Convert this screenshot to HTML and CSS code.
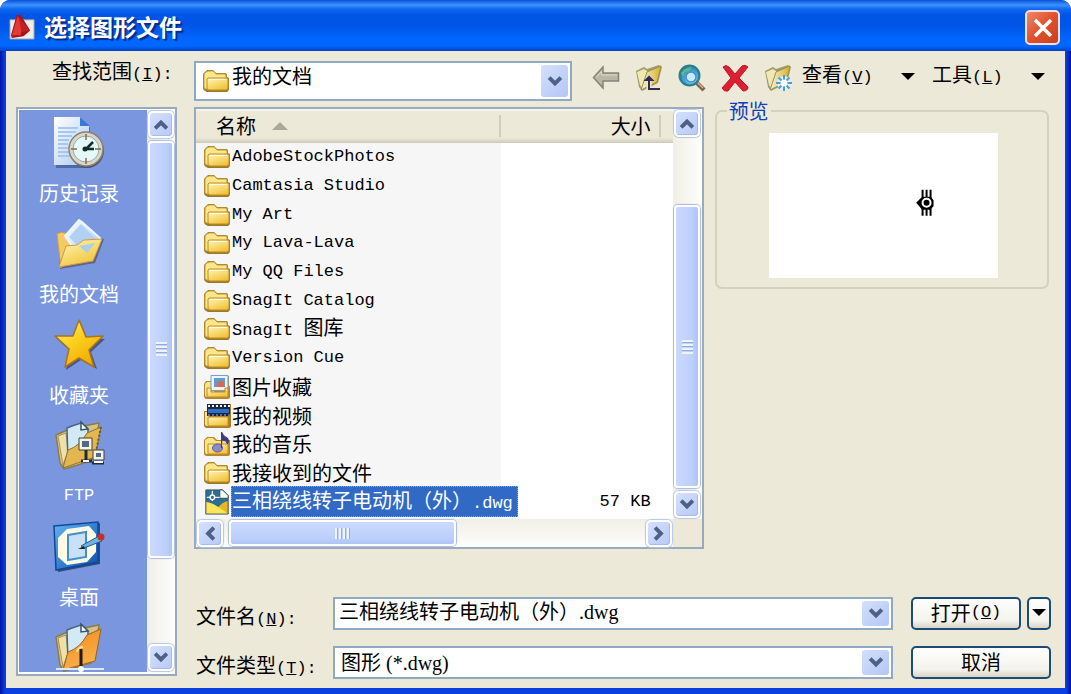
FILE: index.html
```html
<!DOCTYPE html>
<html lang="zh-CN">

<head>
  <meta charset="UTF-8">
  <meta name="viewport" content="width=device-width, initial-scale=1.0">
  <title>选择图形文件</title>
  <link rel="stylesheet" href="styles.css">
</head>

<body>
  <!-- 图标定义 -->
  <svg class="sprite" aria-hidden="true">
    <defs>
      <linearGradient id="gold" x1="0" y1="0" x2="0.6" y2="1">
        <stop offset="0" stop-color="#fff7bb"/>
        <stop offset="1" stop-color="#f2c33a"/>
      </linearGradient>
      <linearGradient id="orange" x1="0" y1="0" x2="0.4" y2="1">
        <stop offset="0" stop-color="#f58a1c"/>
        <stop offset="1" stop-color="#f6b04a"/>
      </linearGradient>
      <linearGradient id="flap" x1="0" y1="0" x2="1" y2="0">
        <stop offset="0" stop-color="#f6f1d2"/>
        <stop offset="0.6" stop-color="#e2cd72"/>
        <stop offset="1" stop-color="#d9b21c"/>
      </linearGradient>
      <linearGradient id="paper" x1="0" y1="0" x2="1" y2="1">
        <stop offset="0" stop-color="#ffffff"/>
        <stop offset="1" stop-color="#a9c8ee"/>
      </linearGradient>
      <linearGradient id="star" x1="0" y1="0" x2="0.7" y2="1">
        <stop offset="0" stop-color="#fff27a"/>
        <stop offset="0.5" stop-color="#fccf1e"/>
        <stop offset="1" stop-color="#f0a800"/>
      </linearGradient>
      <linearGradient id="desk" x1="0" y1="0" x2="1" y2="1">
        <stop offset="0" stop-color="#5fb4f2"/>
        <stop offset="1" stop-color="#0c4fae"/>
      </linearGradient>
      <radialGradient id="lens" cx="0.6" cy="0.65" r="0.7">
        <stop offset="0" stop-color="#d6f2ff"/>
        <stop offset="0.5" stop-color="#4ba3d8"/>
        <stop offset="1" stop-color="#1f6fa0"/>
      </radialGradient>
    </defs>
    <symbol id="i-folder" viewBox="0 0 28 24">
      <path d="M3 22q-2-1-2-3V6q0-2 2-3l2-2h6l3 3h9q2 0 2 2v2l2 1v11q0 2-2 3H5z" fill="#9a7a28"/>
      <path d="M2 6q0-2 2-3l2-1h5l3 3h9q1 0 1 2v13H4q-2 0-2-2z" fill="#fbe68c" stroke="#c79c35"/>
      <path d="M6 9h18q2 0 2 1v9q0 2-2 2H7q-2 0-2-2v-9z" fill="url(#gold)" stroke="#c08c26"/>
      <path d="M7 10.500h17" stroke="#fffbe0"/>
    </symbol>
    <symbol id="i-arrow" viewBox="0 0 12 10">
      <path d="M1.500 2 6 6.500 10.500 2" fill="none" stroke="#4d6185" stroke-width="3"/>
    </symbol>
    <symbol id="i-back" viewBox="0 0 28 28">
      <path d="M1.500 13.500 11 3v6h15.500v8H11v7z" fill="#b9b8a6" stroke="#858478" stroke-width="1.500"/>
      <path d="M4 13.500 9.500 7.500V11H25" fill="none" stroke="#dcdbc8"/>
    </symbol>
    <symbol id="i-tilt" viewBox="0 0 28 28">
      <path d="M1 7 9 3l3 2 12-4 3 2-4 16-16 8-3-4z" fill="#a39a66"/>
      <path d="M2 8l7-3 3 2 1 5-6 12-2-3z" fill="#efe7b4"/>
      <path d="M12 8 26 2l-4 16L6 26z" fill="url(#flap)" stroke="#99905c"/>
    </symbol>
    <symbol id="i-up" viewBox="0 0 28 28">
      <use href="#i-tilt"/>
      <path d="M26 25H14V15" fill="none" stroke="#efe8c4" stroke-width="5"/>
      <path d="M25 25H14V14" fill="none" stroke="#2d2a5e" stroke-width="2"/>
      <path d="M8.500 17 14 11.500l5.500 5.500z" fill="#2d2a5e"/>
    </symbol>
    <symbol id="i-search" viewBox="0 0 28 28">
      <path d="m18 18 8 8" stroke="#7b6550" stroke-width="4.500"/>
      <path d="m18 17 7 7" stroke="#d7b189" stroke-width="1.500"/>
      <circle cx="11.500" cy="11.500" r="10" fill="url(#lens)" stroke="#2a7f8e" stroke-width="2"/>
      <path d="M3 9q4-6 11-6l-3 4-4 1-2 5z" fill="#5fb883"/>
      <circle cx="13" cy="13" r="5" fill="#c8ecff" stroke="#4392c4" stroke-width="1.500"/>
    </symbol>
    <symbol id="i-delete" viewBox="0 0 28 28">
      <path d="M2 3q3-3 6 0l6 7 7-8q3-2 6 1l-9 11 9 9q0 4-5 4l-8-9-7 9q-4 1-6-3l9-10z" fill="#dc1f32" stroke="#b9182a"/>
    </symbol>
    <symbol id="i-new" viewBox="0 0 28 28">
      <use href="#i-tilt"/>
      <circle cx="20" cy="19" r="7" fill="#dff0f6"/>
      <path d="M20 11v16M12 19h16M14.500 13.500l11 11M25.500 13.500l-11 11" stroke="#4f9cd0" stroke-width="2"/>
      <circle cx="20" cy="19" r="3.500" fill="#fff"/>
    </symbol>
    <symbol id="i-pictures" viewBox="0 0 28 26">
      <path d="M1 10l2-3h5v-5h18v9l1 2v10q0 2-2 2H4q-3 0-3-3z" fill="#b2872d"/>
      <path d="M2 10l2-2h5l2 3v12H4q-2 0-2-2z" fill="#fae384"/>
      <path d="M8 1.500h17v15H8z" fill="#eef4fd" stroke="#7b9cc8"/>
      <path d="M11 4h11v9H11z" fill="#5a9ddc"/>
      <path d="M13 13l2-6h5l2 6z" fill="#d96b4c"/>
      <path d="M4 14h4v4h14v-4h3v8q0 1-1 1H5q-1 0-1-1z" fill="url(#gold)" stroke="#c18c27"/>
    </symbol>
    <symbol id="i-video" viewBox="0 0 28 26">
      <path d="M1 8h3V1h24v22q0 2-3 2H4q-3 0-3-3z" fill="#a77d28"/>
      <path d="M2 9h4v14H4q-2 0-2-2z" fill="#fae384"/>
      <path d="M4 1h23v12H4z" fill="#1d2636"/>
      <path d="M5 6h21v4H5z" fill="#2f6fd0"/>
      <path d="M5 3h22" stroke="#eef2f7" stroke-width="2" stroke-dasharray="2 2"/>
      <path d="M5 12h22" stroke="#a9b6c6" stroke-dasharray="2 2"/>
      <path d="M5 14h20v9H6q-1 0-1-1z" fill="url(#gold)" stroke="#c18c27"/>
    </symbol>
    <symbol id="i-music" viewBox="0 0 28 26">
      <path d="M1 9l3-3h7l3 3h13v14q0 2-2 2H4q-3 0-3-3z" fill="#b2872d"/>
      <path d="M2 9l3-2h5l3 3h11v13H4q-2 0-2-2z" fill="#fae384"/>
      <path d="M5 13h20v9q0 1-1 1H6q-1 0-1-1z" fill="url(#gold)" stroke="#c18c27"/>
      <ellipse cx="14.500" cy="17" rx="5" ry="4" fill="#8d8bc6" stroke="#5f5aa0"/>
      <path d="M18.500 17V1q2 5 6 6 2 3 0 6-1-4-5-4" fill="#3c3a86" stroke="#3c3a86"/>
    </symbol>
    <symbol id="i-dwg" viewBox="0 0 28 28">
      <path d="M2 1h18l6 6v20H2z" fill="#2c6f95"/>
      <path d="M2 14q8 1 13 6 5-6 11-7v14H2z" fill="#e9b71c"/>
      <path d="M2 14q9 1 24 13H2z" fill="#ffe559"/>
      <path d="M2 1h18l6 6v20H2z" fill="none" stroke="#354b50"/>
      <path d="M17 1v9h9V7l-6-6z" fill="#f3f8fb" stroke="#354b50"/>
      <path d="M9 2v11M3 9h14" stroke="#dcebf3" stroke-width="1.500"/>
      <circle cx="9" cy="9" r="2.500" fill="#2c6f95" stroke="#fff" stroke-width="1.500"/>
    </symbol>
    <symbol id="i-history" viewBox="0 0 54 54">
      <path d="M4 3h25l9 9v40H4z" fill="#4f68a6"/>
      <path d="M2 1h26l9 9v39H2z" fill="url(#paper)"/>
      <path d="M28 1v9h10z" fill="#3a78d6"/>
      <path d="M6 12h20M6 16h18M6 20h14M6 24h11M6 28h10M6 32h10M6 36h11M6 40h14" stroke="#a5c9ee" stroke-width="2"/>
      <circle cx="35" cy="35" r="17" fill="#4d5566"/>
      <circle cx="34" cy="33" r="17" fill="#dcd6c8" stroke="#85827b" stroke-width="1.500"/>
      <circle cx="34" cy="33" r="13" fill="#e2fafa" stroke="#98a9a8"/>
      <path d="M34 18v6M34 42v6M19 33h6M43 33h6" stroke="#94643c" stroke-width="1.500"/>
      <path d="m41 26-7 7h8" fill="none" stroke="#172b28" stroke-width="2.500"/>
      <circle cx="33" cy="33" r="2.500" fill="#172b28"/>
    </symbol>
    <symbol id="i-docs" viewBox="0 0 54 54">
      <path d="M8 52 6 18l6-2 40 6-9 24z" fill="#59658c"/>
      <path d="M5 17q4-3 8-1l4 4 9 2-17 29z" fill="#f5c964" stroke="#cf9f42"/>
      <path d="M13 19 27 3l3 2 18 16-18 22z" fill="url(#paper)" stroke="#e9f6ff" stroke-width="2"/>
      <path d="m17 20 12-13 15 15-15 10z" fill="#b2cff4"/>
      <path d="M14 29l11-1 7-5 18-1-9 22-34 6z" fill="url(#gold)" stroke="#cf9b3f"/>
      <path d="m27 29 16-3-8 10z" fill="#a8d1e9"/>
    </symbol>
    <symbol id="i-star" viewBox="0 0 54 54">
      <path d="m28 3 7 17 18 1-14 13 6 17-16-9-15 10 4-19L4 20l18-2z" fill="#41466b" opacity="0.8"/>
      <path d="m27 2 7 17 17-1-14 14 5 17-15-9-14 9 4-18L3 18l18 0z" fill="url(#star)" stroke="#a8741d" stroke-width="1.500" stroke-linejoin="round"/>
    </symbol>
    <!-- 带文件页的打开文件夹 -->
    <symbol id="i-tabfolder" viewBox="0 0 54 54">
      <path d="M4 16l9-4 4-2 30-6-2 12-6 26-27 8-4-6z" fill="#d9c384" stroke="#8d7c48" stroke-width="1.500"/>
      <path d="M6 17l8-3 2 18-5 14z" fill="#efe0a8" stroke="#a8945a"/>
      <path d="M15 9l5-2 9-3 7 6v20L16 44z" fill="#d3e9f3" stroke="#476780" stroke-width="1.500"/>
      <path d="M29 3v8l7-1z" fill="#fff" stroke="#35556e" stroke-width="1.500"/>
    </symbol>
    <symbol id="i-ftp" viewBox="0 0 54 54">
      <use href="#i-tabfolder"/>
      <path d="M16 31q12-4 19-17l14-6-6 30-32 11z" fill="#e3b650" stroke="#8f7433"/>
      <path d="M49 8 43 38" stroke="#6d5a2c" stroke-width="2" stroke-dasharray="2 2"/>
      <path d="M27 19h13v12H27zM41 31h11v10H41z" fill="#f6f3df" stroke="#3c4142"/>
      <path d="M30 22h7v6h-7zM44 34h5v4h-5z" fill="#53688b"/>
      <path d="M34 31v11h6M29 42h10M40 44h12" fill="none" stroke="#232d32" stroke-width="3"/>
      <path d="M31 42h6M42 43h9" stroke="#fff" stroke-width="2"/>
    </symbol>
    <symbol id="i-desktop" viewBox="0 0 54 54">
      <path d="M4 8 48 3v41L6 52z" fill="#334878"/>
      <path d="M2 6 46 2v40L4 50z" fill="url(#desk)" stroke="#0e4999" stroke-width="1.500"/>
      <path d="M15 9 37 6l7 8v18l-9 10-20 3-9-8V18z" fill="#fdfbe3"/>
      <path d="M16 15 34 12v25l-18 3z" fill="#c7e1f8" stroke="#468ecb" stroke-width="2"/>
      <path d="m29 26 18-10 3 5-18 7z" fill="#6db3e5" stroke="#275b8c"/>
      <path d="m26 29 6-3 1 3z" fill="#222"/>
      <circle cx="49" cy="17" r="3.500" fill="#c92d25"/>
    </symbol>
    <symbol id="i-buzz" viewBox="0 0 54 54">
      <use href="#i-tabfolder"/>
      <path d="M16 31q12-4 19-17l14-6-6 32-32 9z" fill="url(#orange)" stroke="#9a6220"/>
      <path d="M25 31q1-5 6-5" fill="none" stroke="#fbe0a5" stroke-width="2"/>
      <path d="M29 28v19" stroke="#1d1d1d" stroke-width="3"/>
      <path d="M4 48h48" stroke="#dfe6f5" stroke-width="2"/>
      <circle cx="29" cy="48" r="3" fill="#fff"/>
    </symbol>
  </svg>

  <main class="dialog">
    <header class="titlebar">
      <svg class="app-icon" viewBox="0 0 28 28" aria-hidden="true">
        <path d="M1 6h25v20H1z" fill="#f1eee9" stroke="#9a9ba3"/>
        <path d="M2 22 8 1l4 0 10 16-7 6-12 2z" fill="#a5141a"/>
        <path d="M3 22 9 2l5 12-2 8z" fill="#e23a35"/>
        <path d="m10 2 11 15-8 2z" fill="#c31e22"/>
      </svg>
      <h1>选择图形文件</h1>
      <button class="close" type="button" aria-label="关闭">
        <svg viewBox="0 0 20 20"><path d="m2 2 16 16M18 2 2 18" stroke="#fff" stroke-width="3.500"/></svg>
      </button>
    </header>

    <form class="client">
      <div class="toolbar">
        <label class="look-label" for="lookin">查找范围<span class="en">(<u>I</u>):</span></label>
        <div class="combo combo-look">
          <svg class="folder" aria-hidden="true"><use href="#i-folder"/></svg>
          <select id="lookin">
            <option>我的文档</option>
          </select>
          <span class="drop"><svg class="arrow"><use href="#i-arrow"/></svg></span>
        </div>
        <div class="tools">
          <button type="button" class="tool" aria-label="后退"><svg><use href="#i-back"/></svg></button>
          <button type="button" class="tool" aria-label="向上"><svg><use href="#i-up"/></svg></button>
          <button type="button" class="tool" aria-label="搜索"><svg><use href="#i-search"/></svg></button>
          <button type="button" class="tool" aria-label="删除"><svg><use href="#i-delete"/></svg></button>
          <button type="button" class="tool" aria-label="新建文件夹"><svg><use href="#i-new"/></svg></button>
        </div>
        <button type="button" class="menu-btn"><span>查看<span class="en">(<u>V</u>)</span></span><i class="caret"></i></button>
        <button type="button" class="menu-btn"><span>工具<span class="en">(<u>L</u>)</span></span><i class="caret"></i></button>
      </div>

      <nav class="places">
        <div class="places-list">
          <a href="#"><svg><use href="#i-history"/></svg><span>历史记录</span></a>
          <a href="#"><svg><use href="#i-docs"/></svg><span>我的文档</span></a>
          <a href="#"><svg><use href="#i-star"/></svg><span>收藏夹</span></a>
          <a href="#"><svg><use href="#i-ftp"/></svg><span class="en">FTP</span></a>
          <a href="#"><svg><use href="#i-desktop"/></svg><span>桌面</span></a>
          <a href="#" aria-label="Buzzsaw"><svg><use href="#i-buzz"/></svg></a>
        </div>
        <div class="scroll scroll-places">
          <button type="button" class="sbtn" aria-label="向上滚动"><svg class="arrow up"><use href="#i-arrow"/></svg></button>
          <div class="track"><div class="thumb"><i class="grip"></i></div></div>
          <button type="button" class="sbtn" aria-label="向下滚动"><svg class="arrow"><use href="#i-arrow"/></svg></button>
        </div>
      </nav>

      <section class="files">
        <div class="file-view">
          <table>
            <thead>
              <tr>
                <th class="col-name"><span>名称<i class="sort"></i></span></th>
                <th class="col-size"><span>大小</span></th>
                <th class="col-rest"></th>
              </tr>
            </thead>
            <tbody>
              <tr><td><div class="file"><svg><use href="#i-folder"/></svg><span class="en">AdobeStockPhotos</span></div></td><td></td><td></td></tr>
              <tr><td><div class="file"><svg><use href="#i-folder"/></svg><span class="en">Camtasia Studio</span></div></td><td></td><td></td></tr>
              <tr><td><div class="file"><svg><use href="#i-folder"/></svg><span class="en">My Art</span></div></td><td></td><td></td></tr>
              <tr><td><div class="file"><svg><use href="#i-folder"/></svg><span class="en">My Lava-Lava</span></div></td><td></td><td></td></tr>
              <tr><td><div class="file"><svg><use href="#i-folder"/></svg><span class="en">My QQ Files</span></div></td><td></td><td></td></tr>
              <tr><td><div class="file"><svg><use href="#i-folder"/></svg><span class="en">SnagIt Catalog</span></div></td><td></td><td></td></tr>
              <tr><td><div class="file"><svg><use href="#i-folder"/></svg><span><span class="en">SnagIt </span>图库</span></div></td><td></td><td></td></tr>
              <tr><td><div class="file"><svg><use href="#i-folder"/></svg><span class="en">Version Cue</span></div></td><td></td><td></td></tr>
              <tr><td><div class="file"><svg><use href="#i-pictures"/></svg><span>图片收藏</span></div></td><td></td><td></td></tr>
              <tr><td><div class="file"><svg><use href="#i-video"/></svg><span>我的视频</span></div></td><td></td><td></td></tr>
              <tr><td><div class="file"><svg><use href="#i-music"/></svg><span>我的音乐</span></div></td><td></td><td></td></tr>
              <tr><td><div class="file"><svg><use href="#i-folder"/></svg><span>我接收到的文件</span></div></td><td></td><td></td></tr>
              <tr><td><div class="file"><svg><use href="#i-dwg"/></svg><span class="selected">三相绕线转子电动机（外）<span class="en">.dwg</span></span></div></td><td class="size en">57 KB</td><td></td></tr>
            </tbody>
          </table>
        </div>
        <div class="scroll scroll-files">
          <button type="button" class="sbtn" aria-label="向上滚动"><svg class="arrow up"><use href="#i-arrow"/></svg></button>
          <div class="track"><div class="thumb"><i class="grip"></i></div></div>
          <button type="button" class="sbtn" aria-label="向下滚动"><svg class="arrow"><use href="#i-arrow"/></svg></button>
        </div>
        <div class="scroll scroll-x">
          <button type="button" class="sbtn" aria-label="向左滚动"><svg class="arrow left"><use href="#i-arrow"/></svg></button>
          <div class="track"><div class="thumb"><i class="grip"></i></div></div>
          <button type="button" class="sbtn" aria-label="向右滚动"><svg class="arrow right"><use href="#i-arrow"/></svg></button>
        </div>
      </section>

      <fieldset class="preview">
        <legend>预览</legend>
        <svg class="drawing" viewBox="0 0 230 145" role="img" aria-label="图形预览">
          <path d="M154 57v8M158 57v8M162 57v8M154 75v8M158 75v8M162 75v8" stroke="#000" stroke-width="2"/>
          <path d="M149 70l5-5h8l2 3v5l-3 3h-7z" stroke="#000" stroke-width="2"/>
          <circle cx="158" cy="70" r="4" fill="#000" stroke="#fff" stroke-width="2"/>
        </svg>
      </fieldset>

      <div class="bottom">
        <label for="filename">文件名<span class="en">(<u>N</u>):</span></label>
        <div class="combo">
          <input id="filename" type="text" value="三相绕线转子电动机（外）.dwg">
          <span class="drop"><svg class="arrow"><use href="#i-arrow"/></svg></span>
        </div>
        <div class="open-group">
          <button type="submit" class="btn">打开<span class="en">(<u>O</u>)</span></button>
          <button type="button" class="btn btn-drop" aria-label="打开选项"><i class="caret"></i></button>
        </div>
        <label for="filetype">文件类型<span class="en">(<u>T</u>):</span></label>
        <div class="combo">
          <select id="filetype">
            <option>图形 (*.dwg)</option>
          </select>
          <span class="drop"><svg class="arrow"><use href="#i-arrow"/></svg></span>
        </div>
        <button type="button" class="btn">取消</button>
      </div>
    </form>
  </main>
</body>

</html>
```
FILE: styles.css
```css
* {
  box-sizing: border-box;
}

body {
  margin: 0;
  background: #fff;
  color: #000;
  font: 20px/24px "Noto Sans CJK SC", sans-serif;
}

button,
input,
select {
  margin: 0;
  padding: 0;
  border: 0;
  background: none;
  color: inherit;
  font: inherit;
}

svg {
  display: block;
}

.sprite {
  position: absolute;
  width: 0;
  height: 0;
}

/* 英文等宽 */
.en {
  font-family: "Liberation Mono", "Noto Sans CJK SC", monospace;
  font-size: 17px;
}

.dialog {
  display: flex;
  flex-direction: column;
  height: 100vh;
  padding: 0 6px 6px;
  border-radius: 10px 10px 0 0;
  background: linear-gradient(90deg, #0011a8, #0a3fe0 5px, #0a3fe0 calc(100% - 5px), #0011a0);
  overflow: hidden;
}

/* 标题栏 */
.titlebar {
  display: flex;
  flex: none;
  align-items: center;
  gap: 8px;
  height: 51px;
  margin: 0 -6px;
  padding: 4px 11px 0 9px;
  background: linear-gradient(#0a50d8 0, #3c93ff 5px, #1168f0 9px, #0055e6 15px, #0055e6 26px, #0068ff 40px, #0068ff 46px, #0041c4 51px);
}

.titlebar h1 {
  flex: 1;
  margin: 0;
  padding-bottom: 4px;
  color: #fff;
  font-size: 23px;
  line-height: 30px;
  text-shadow: 2px 2px 1px #0a2a86;
}

.app-icon {
  width: 27px;
  height: 27px;
}

.close {
  display: grid;
  place-items: center;
  width: 35px;
  height: 35px;
  border: 2px solid #f3dfe4;
  border-radius: 5px;
  background: linear-gradient(135deg, #ec8a6c, #e0502a 50%, #c8401c);
}

.close svg {
  width: 20px;
  height: 20px;
}

.client {
  display: grid;
  flex: 1;
  grid-template-columns: 161px minmax(0, 512fr) minmax(0, 334fr);
  grid-template-rows: 40px minmax(0, 1fr) auto;
  column-gap: 11px;
  min-height: 0;
  padding: 10px 14px 9px 10px;
  background: #ece9d8;
}

/* 工具栏 */
.toolbar {
  display: flex;
  grid-column: 1 / -1;
  padding-right: 6px;
}

.look-label {
  width: 178px;
  padding: 0 0 0 36px;
  line-height: 20px;
  white-space: nowrap;
}

.combo {
  display: flex;
  align-items: center;
  min-width: 0;
  padding: 2px;
  border: 2px solid #8fa9c3;
  background: #fff;
}

.combo input,
.combo select {
  flex: 1;
  min-width: 0;
  padding: 0 2px;
  outline: none;
  appearance: none;
  font-family: "Liberation Serif", "Noto Sans CJK SC", serif;
  line-height: 24px;
}

.combo select {
  padding-left: 4px;
}

.combo-look {
  flex: 1;
}

.combo-look .folder {
  width: 28px;
  height: 24px;
  margin-left: 4px;
}

.combo-look select {
  padding: 0 2px 8px;
}

.drop {
  display: grid;
  place-items: center;
  align-self: stretch;
  width: 27px;
  border-radius: 3px;
  background: linear-gradient(135deg, #d3dffc, #b3c6f5);
  pointer-events: none;
}

.arrow {
  width: 16px;
  height: 13px;
}

.arrow.up {
  transform: rotate(180deg);
}

.arrow.left {
  transform: rotate(90deg);
}

.arrow.right {
  transform: rotate(-90deg);
}

.tools {
  display: flex;
  gap: 15px;
  margin: 0 10px 0 20px;
}

.tool svg {
  width: 28px;
  height: 28px;
}

.tool {
  height: 34px;
}

.menu-btn {
  display: flex;
  align-items: center;
  justify-content: space-between;
  width: 113px;
  height: 30px;
}

.menu-btn + .menu-btn {
  margin-left: 17px;
}

.caret {
  border: solid transparent;
  border-width: 7px 7px 0;
  border-top-color: #000;
}

/* 左侧位置列表 */
.places,
.files {
  border: 2px solid #98aabd;
  background: #fff;
}

.places {
  display: flex;
  grid-row: 2 / 4;
  margin: 6px 0 3px;
  padding: 1px 0 2px 1px;
}

.places-list {
  flex: 1;
  padding: 6px 8px 0 0;
  background: #7a96df;
  overflow: hidden;
}

.places-list a {
  display: flex;
  flex-direction: column;
  align-items: center;
  gap: 11px;
  height: 101px;
  color: #fff;
  text-decoration: none;
}

.places-list svg {
  flex: none;
  width: 54px;
  height: 54px;
}

/* 滚动条 */
.scroll {
  display: flex;
  flex-direction: column;
  align-items: center;
  padding: 1px 0;
  background: linear-gradient(90deg, #f0efe6, #fefefb);
}

.scroll-places {
  width: 28px;
}

.sbtn {
  display: grid;
  flex: none;
  place-items: center;
  width: 26px;
  height: 27px;
  border: 2px solid #fff;
  border-radius: 5px;
  background: linear-gradient(135deg, #d5e0fd, #b7c9f7);
  box-shadow: inset -1px -1px 0 #a5bbec, 0 0 1px 1px #b5c5e6;
}

.track {
  display: grid;
  flex: 1;
  min-height: 0;
}

.thumb {
  display: grid;
  grid-row: 2;
  place-items: center;
  width: 26px;
  border: 2px solid #fff;
  border-radius: 4px;
  background: linear-gradient(90deg, #cbd9fd, #bccffb 75%, #afc4f5);
  box-shadow: 0 0 1px 1px #a7b9df;
}

.grip {
  width: 11px;
  height: 14px;
  background: repeating-linear-gradient(#eef4fe 0, #eef4fe 2px, #95abe0 2px, #95abe0 3px, transparent 3px, transparent 4px);
}

.scroll-places .track {
  grid-template-rows: 3fr 419fr 87fr;
}

.scroll-files .track {
  grid-template-rows: 68fr 281fr 3fr;
}

.scroll-x {
  flex-direction: row;
  padding: 0 1px;
  background: linear-gradient(#f0efe6, #fefefb);
}

.scroll-x .track {
  grid-template-columns: 6fr 227fr 190fr;
}

.scroll-x .thumb {
  grid-row: 1;
  grid-column: 2;
  width: auto;
  height: 26px;
  background: linear-gradient(#cbd9fd, #bccffb 75%, #afc4f5);
}

.scroll-x .grip {
  width: 15px;
  height: 11px;
  background: repeating-linear-gradient(90deg, #eef4fe 0, #eef4fe 2px, #95abe0 2px, #95abe0 3px, transparent 3px, transparent 4px);
}

/* 文件列表 */
.files {
  display: grid;
  grid-column: 2;
  grid-template-columns: minmax(0, 1fr) 29px;
  grid-template-rows: minmax(0, 1fr) 28px;
  margin: 6px 0 48px 6px;
  background: #ece9d8;
}

.file-view {
  padding-bottom: 3px;
  background: linear-gradient(90deg, #f6f6f6 64%, #fff 64%);
}

.file-view table {
  width: 100%;
  height: 100%;
  border-collapse: collapse;
  table-layout: fixed;
}

.file-view th,
.file-view td {
  padding: 0;
}

.file-view thead tr {
  height: 34px;
  background: linear-gradient(#fafaf4 0, #ece9d8 3px, #ebe8d7 29px, #cdc9b8 34px);
}

.file-view th {
  font-weight: normal;
  text-align: left;
}

.file-view th > span {
  display: flex;
  align-items: center;
  height: 22px;
  padding-left: 20px;
  border-right: 2px solid #d0cdbd;
}

.col-name {
  width: 64%;
}

.file-view .col-size > span {
  justify-content: flex-end;
  padding-right: 8px;
}

.col-rest {
  width: 12px;
}

.sort {
  margin-left: 16px;
  border: solid transparent;
  border-width: 0 8px 8px;
  border-bottom-color: #aca899;
}

.file {
  display: flex;
  align-items: center;
  height: 27px;
  padding-left: 7px;
  white-space: nowrap;
}

.file svg {
  flex: none;
  width: 28px;
  height: 26px;
}

.file > span {
  padding: 0 1px;
}

.file .selected {
  padding-right: 5px;
  background: #316ac5;
  color: #fff;
  line-height: 27px;
  outline: 1px dotted #d9964a;
  outline-offset: -1px;
}

.file-view .size {
  padding-right: 10px;
  text-align: right;
}

/* 预览 */
.preview {
  align-self: start;
  min-width: 0;
  margin: 0 2px 0 0;
  padding: 12px 49px 9px 52px;
  border: 2px solid #d3d1c0;
  border-radius: 7px;
}

.preview legend {
  margin-left: -42px;
  padding: 0 2px;
  color: #0f3fbd;
  line-height: 20px;
}

.drawing {
  width: 100%;
  background: #fff;
}

/* 底部 */
.bottom {
  display: grid;
  grid-column: 2 / 4;
  grid-template-columns: 121px minmax(0, 1fr) 140px;
  grid-template-rows: 33px 33px;
  gap: 16px 18px;
  margin-left: 6px;
}

.bottom label {
  padding: 7px 0 0 2px;
  line-height: 24px;
  white-space: nowrap;
}

.bottom .combo input {
  padding-bottom: 4px;
}

.open-group {
  display: grid;
  grid-template-columns: 1fr 24px;
  gap: 6px;
}

.btn {
  display: flex;
  align-items: center;
  justify-content: center;
  height: 33px;
  padding-bottom: 2px;
  border: 2px solid #1c4b78;
  border-radius: 5px;
  background: linear-gradient(#fff, #f3f2ec 75%, #d9d4c6);
}
```
